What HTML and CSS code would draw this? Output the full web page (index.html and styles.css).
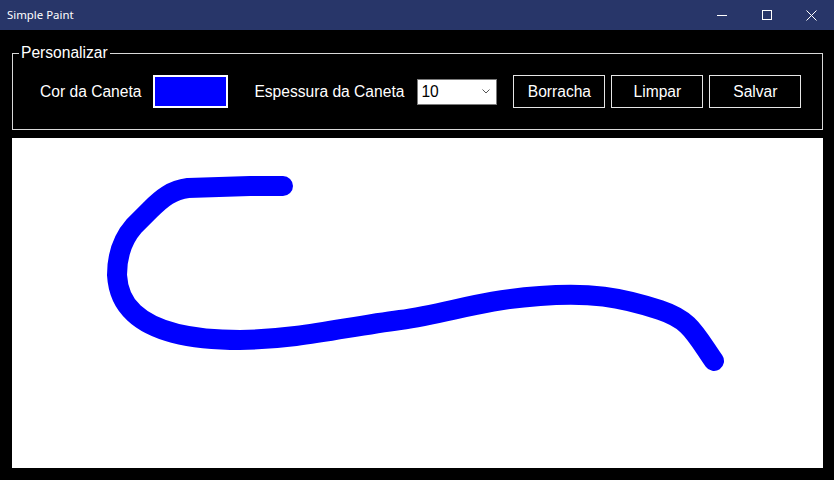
FILE: index.html
```html
<!DOCTYPE html>
<html lang="pt">
<head>
<meta charset="utf-8">
<title>Simple Paint</title>
<link rel="stylesheet" href="styles.css">
</head>
<body>
<div class="window">
  <header class="titlebar">
    <span class="title">Simple Paint</span>
    <div class="controls">
      <span class="ctl">
        <svg width="10" height="10" viewBox="0 0 10 10"><path d="M0 5.5H10" stroke="#fff" stroke-width="1"/></svg>
      </span>
      <span class="ctl">
        <svg width="10" height="10" viewBox="0 0 10 10"><rect x="0.5" y="0.5" width="9" height="9" fill="none" stroke="#fff" stroke-width="1"/></svg>
      </span>
      <span class="ctl">
        <svg width="11" height="11" viewBox="0 0 11 11"><path d="M0.5 0.5L10.5 10.5M10.5 0.5L0.5 10.5" stroke="#fff" stroke-width="1"/></svg>
      </span>
    </div>
  </header>
  <main class="content">
    <fieldset class="group">
      <legend class="legend">Personalizar</legend>
      <div class="row">
        <span class="label label-cor">Cor da Caneta</span>
        <span class="swatch"></span>
        <span class="label label-esp">Espessura da Caneta</span>
        <div class="select">
          <span class="select-value">10</span>
          <svg class="chev" width="8" height="5" viewBox="0 0 8 5"><path d="M0.5 0.5L4 4L7.5 0.5" fill="none" stroke="#555" stroke-width="1"/></svg>
        </div>
        <button class="btn btn-first">Borracha</button>
        <button class="btn">Limpar</button>
        <button class="btn">Salvar</button>
      </div>
    </fieldset>
    <div class="canvas">
      <svg class="drawing" width="811" height="330" viewBox="12 138 811 330">
        <path d="M283 186 L250 186 L188 188 C172 190 162 198 150 210 L134 226 C120 242 117 260 117 275 C118 292 124 304 134 313 C150 328 180 340 240 340 C300 339 340 328 400 320 C450 313 480 300 540 296 C590 292 620 297 660 310 C690 320 694 332 714 361" fill="none" stroke="#0000ff" stroke-width="20" stroke-linecap="round" stroke-linejoin="round"/>
      </svg>
    </div>
  </main>
</div>
</body>
</html>
```

FILE: styles.css
```css
* { box-sizing: border-box; }
html, body {
  margin: 0;
  padding: 0;
  background: #000;
}
body {
  width: 834px;
  height: 480px;
  overflow: hidden;
  font-family: "Liberation Sans", Arial, sans-serif;
  color: #fff;
}
.titlebar {
  height: 30px;
  background: #283669;
  display: flex;
  align-items: center;
  justify-content: space-between;
}
.title {
  font-family: "Noto Sans", "Open Sans", sans-serif;
  font-size: 11.4px;
  color: #fff;
  padding-left: 7px;
  padding-bottom: 1px;
}
.controls {
  display: flex;
  height: 30px;
}
.ctl {
  width: 45px;
  height: 30px;
  display: flex;
  align-items: center;
  justify-content: center;
}
.ctl svg { display: block; }
.content {
  padding: 14px 11px 0 12px;
}
.group {
  margin: 0;
  padding: 0;
  border: 1px solid #d9d9d9;
  min-width: 0;
}
.legend {
  margin-left: 6px;
  padding: 0 2px;
  font-size: 15.6px;
  line-height: 18px;
  color: #fff;
}
.row {
  display: flex;
  align-items: center;
  height: 33px;
  margin: 13px 0 21px 0;
}
.label {
  font-size: 15.6px;
  line-height: 18px;
  white-space: nowrap;
}
.label-cor { margin-left: 27px; }
.swatch {
  width: 75px;
  height: 33px;
  border: 2px solid #fff;
  background: #0000ff;
  margin-left: 12px;
}
.label-esp { margin-left: 26px; }
.select {
  width: 80px;
  height: 26px;
  margin-left: 13px;
  background: #fff;
  border: 1px solid #7a7a7a;
  display: flex;
  align-items: center;
  justify-content: space-between;
  padding: 0 6px 0 3px;
}
.select-value {
  color: #000;
  font-size: 15.6px;
  line-height: 18px;
}
.chev { display: block; }
.btn {
  width: 92px;
  height: 33px;
  margin-left: 6px;
  background: #000;
  border: 1px solid #e6e6e6;
  color: #fff;
  font-family: "Liberation Sans", Arial, sans-serif;
  font-size: 15.6px;
  padding: 0;
}
.btn-first { margin-left: 16px; }
.canvas {
  margin-top: 8px;
  height: 330px;
  background: #fff;
}
.drawing { display: block; }
```
